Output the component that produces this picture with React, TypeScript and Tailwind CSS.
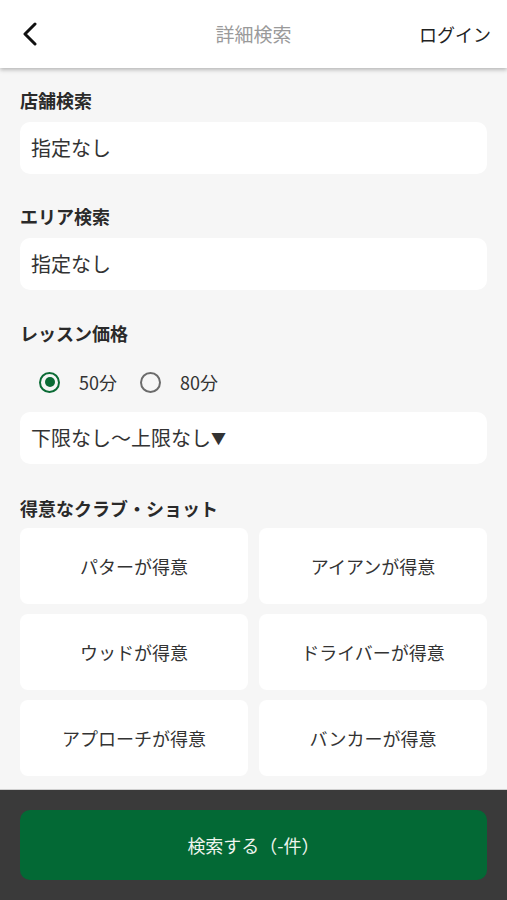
import React, { useState } from 'react';

const FONT = { fontFamily: '"Noto Sans CJK JP", "Noto Sans", sans-serif' };

const skills = [
  'パターが得意',
  'アイアンが得意',
  'ウッドが得意',
  'ドライバーが得意',
  'アプローチが得意',
  'バンカーが得意',
];

const Radio: React.FC<{ checked: boolean; label: string; onClick: () => void }> = ({
  checked,
  label,
  onClick,
}) => (
  <button onClick={onClick} className="flex items-center gap-[19px]">
    <span
      className={`flex h-[21px] w-[21px] items-center justify-center rounded-full border-[2.5px] ${
        checked ? 'border-[#0b6b35]' : 'border-[#6b6b6b]'
      }`}
    >
      {checked && <span className="h-[10px] w-[10px] rounded-full bg-[#0b6b35]" />}
    </span>
    <span className="text-[18px] text-[#333]">{label}</span>
  </button>
);

export default function App() {
  const [minutes, setMinutes] = useState<50 | 80>(50);

  return (
    <div style={FONT} className="flex h-[900px] flex-col overflow-hidden bg-[#f6f6f6]">
      {/* Header */}
      <header className="relative z-10 flex h-[68px] shrink-0 items-center justify-between bg-white px-5 shadow-[0_2px_4px_rgba(0,0,0,0.25)]">
        <svg width="18" height="24" viewBox="0 0 18 24" className="ml-[1px]">
          <path d="M14 2 L4 12 L14 22" fill="none" stroke="#111" strokeWidth="3" strokeLinecap="round" strokeLinejoin="round" />
        </svg>
        <h1 className="absolute left-1/2 -translate-x-1/2 text-[19px] text-[#9a9a9a]">詳細検索</h1>
        <span className="mr-[-4px] text-[18px] text-[#222]">ログイン</span>
      </header>

      {/* Form */}
      <main className="flex-1 overflow-hidden px-5 pt-[22px]">
        <h2 className="text-[18px] font-bold leading-[20px] text-[#2a2a2a]">店舗検索</h2>
        <div className="mt-[12px] flex h-[52px] items-center rounded-[10px] bg-white px-[11px] text-[20px] text-[#333]">
          指定なし
        </div>

        <h2 className="mt-[32px] text-[18px] font-bold leading-[20px] text-[#2a2a2a]">エリア検索</h2>
        <div className="mt-[12px] flex h-[52px] items-center rounded-[10px] bg-white px-[11px] text-[20px] text-[#333]">
          指定なし
        </div>

        <h2 className="mt-[33px] text-[18px] font-bold leading-[20px] text-[#2a2a2a]">レッスン価格</h2>
        <div className="mt-[29px] flex h-[20px] items-center gap-[23px] pl-[19px]">
          <Radio checked={minutes === 50} label="50分" onClick={() => setMinutes(50)} />
          <Radio checked={minutes === 80} label="80分" onClick={() => setMinutes(80)} />
        </div>
        <div className="mt-[20px] flex h-[52px] items-center rounded-[10px] bg-white px-[11px] text-[20px] text-[#333]">
          下限なし～上限なし<span className="text-[15px]">▼</span>
        </div>

        <h2 className="mt-[34px] text-[18px] font-bold leading-[20px] text-[#2a2a2a]">得意なクラブ・ショット</h2>
        <div className="mt-[10px] grid grid-cols-2 gap-x-[11px] gap-y-[10px]">
          {skills.map((s) => (
            <button
              key={s}
              className="flex h-[76px] items-center justify-center rounded-[8px] bg-white text-[18px] text-[#333]"
            >
              {s}
            </button>
          ))}
        </div>
      </main>

      {/* Footer */}
      <footer className="shrink-0 border-t border-[#cfcfcf] bg-[#3a3a3a] px-5 pb-[20px] pt-[20px]">
        <button className="flex h-[70px] w-full items-center justify-center rounded-[10px] bg-[#036935] text-[18px] text-[#eef5ee]">
          検索する（-件）
        </button>
      </footer>
    </div>
  );
}
